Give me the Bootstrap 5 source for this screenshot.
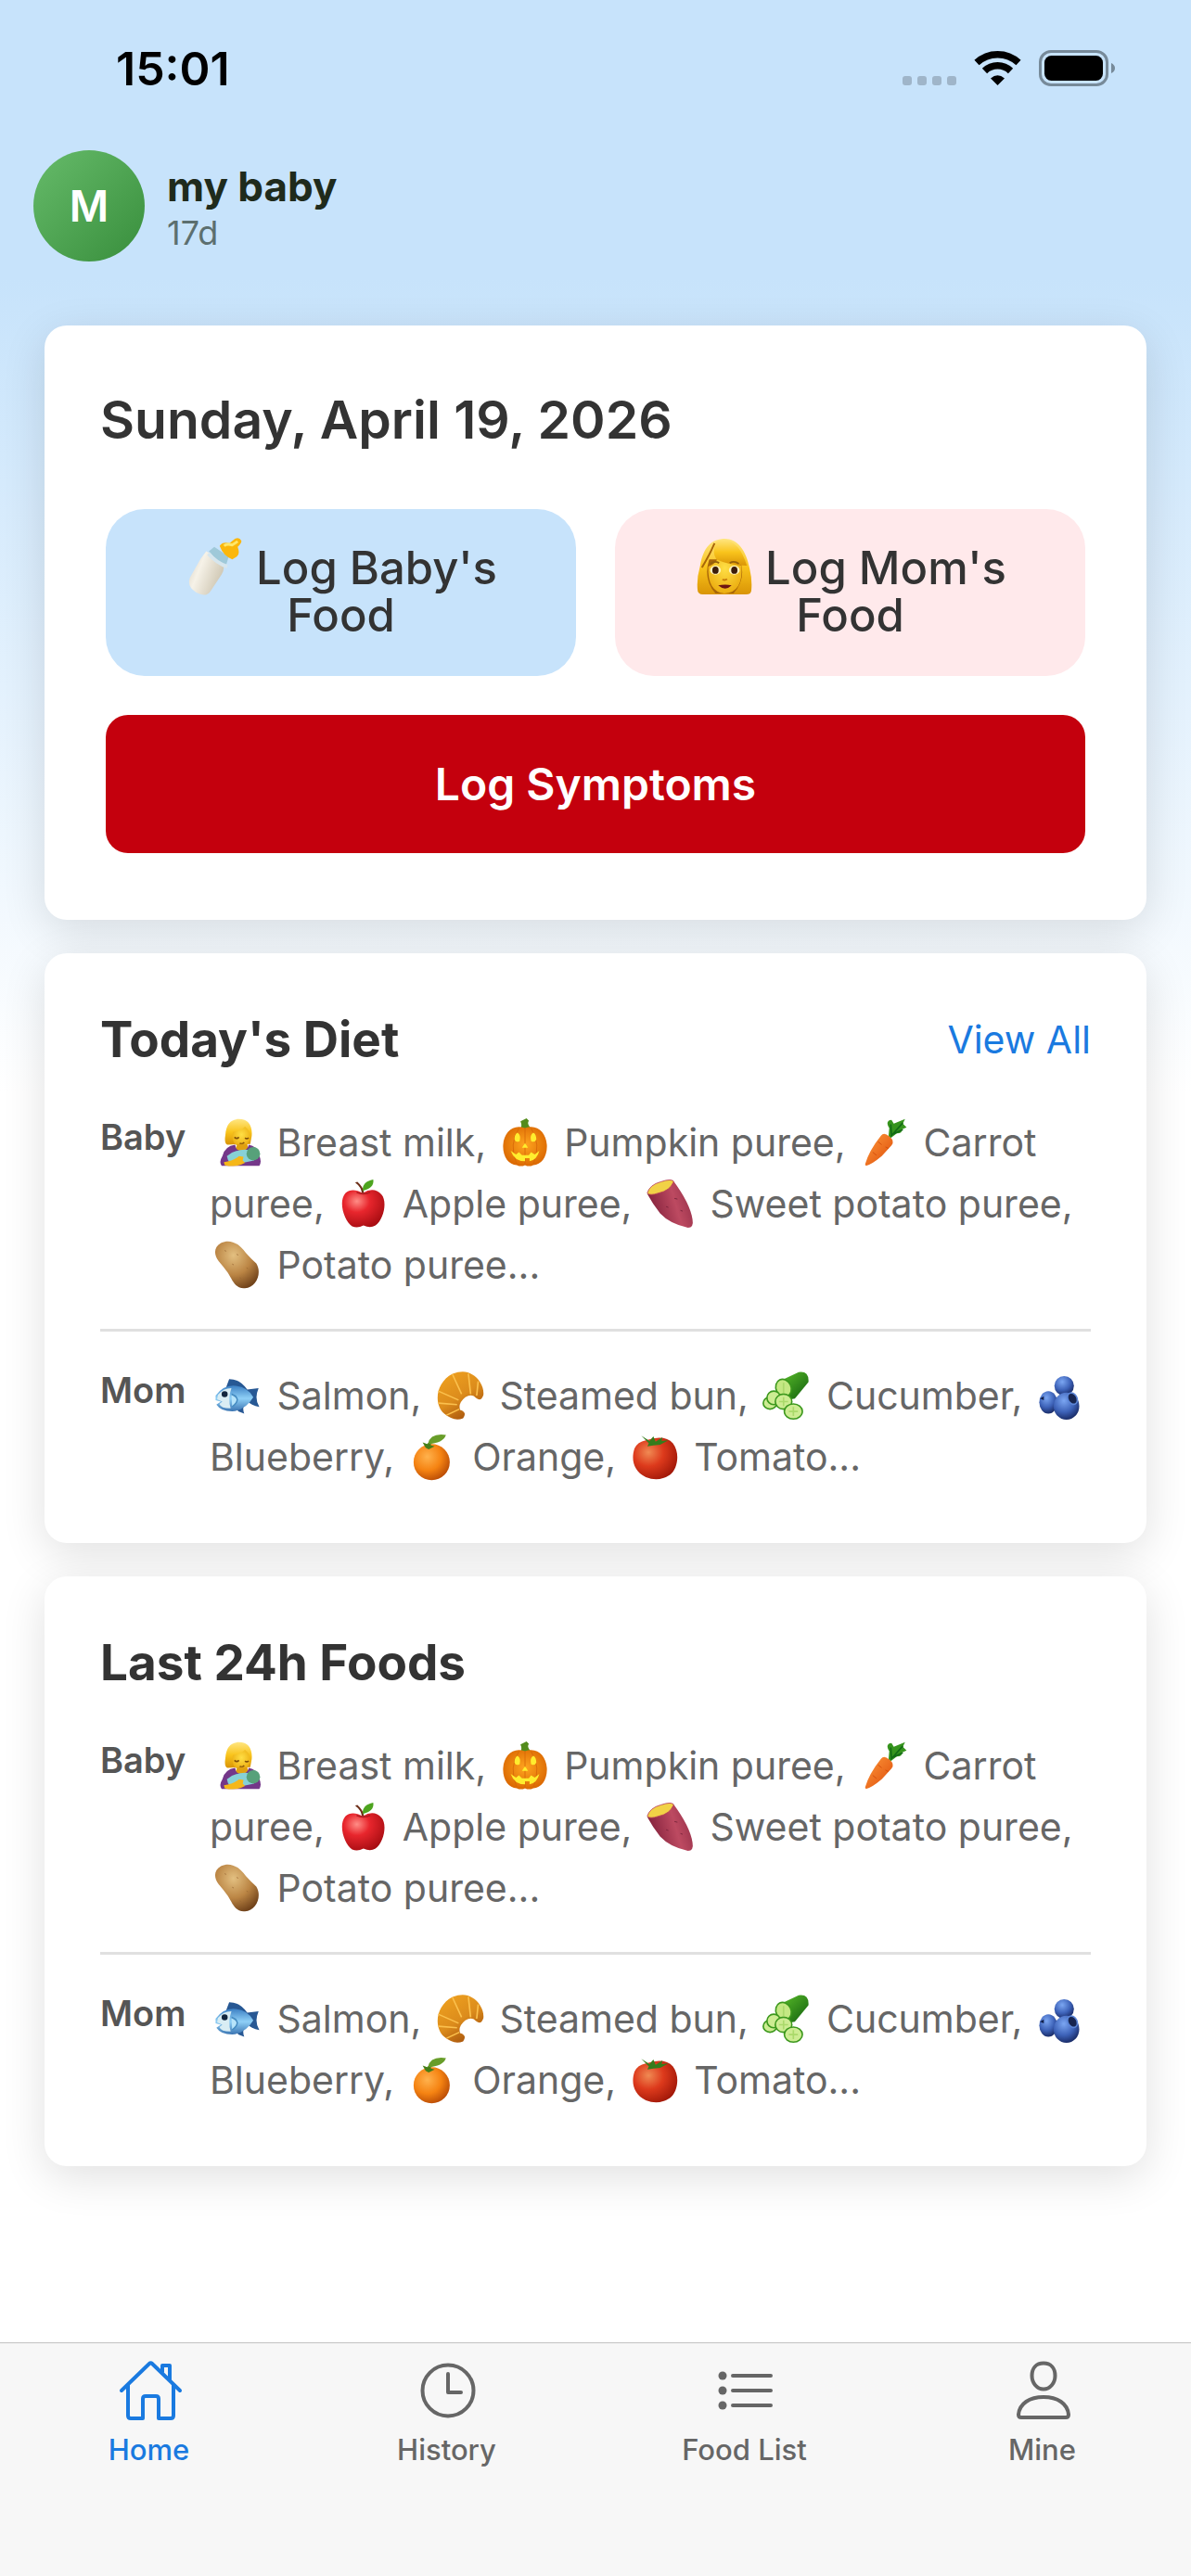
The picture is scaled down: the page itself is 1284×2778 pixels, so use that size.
<!DOCTYPE html>
<html lang="en">
<head>
<meta charset="utf-8">
<meta name="viewport" content="width=device-width, initial-scale=1">
<title>my baby</title>
<link rel="stylesheet" href="https://cdn.jsdelivr.net/npm/bootstrap@5.3.0/dist/css/bootstrap.min.css">
<style>
body{font-family:Inter,"Noto Sans",sans-serif;color:#333;background:#fff}
.app-shell{background:linear-gradient(180deg,#c7e3fb 300px,#fff 1180px)}
.status-bar{padding:44px 81px 58px 125px}
.status-time{font-size:50px;line-height:60px;font-weight:600;color:#000}
.status-icons{margin-top:-3px}
.profile-bar{padding:0 36px 69px;gap:24px}
.avatar{width:120px;height:120px;font-size:46px;background:linear-gradient(135deg,#66bb6a,#388e3c)}
.profile-name{font-size:44px;line-height:54px;font-weight:700;color:#1f2b1c}
.profile-age{font-size:36px;line-height:46px;color:#5c6f6f}
.feed{padding:0 48px 60px;gap:36px}
.panel{background:#fff;border-radius:24px;padding:60px;box-shadow:0 12px 48px rgba(0,0,0,.12)}
.date-title{font-size:57px;line-height:84px;font-weight:600}
.log-grid{margin:54px 6px 12px;gap:42px}
.log-pair{gap:42px}
.log-btn{flex:1 1 0;height:180px;border:0;border-radius:42px;font-size:49px;line-height:51px;font-weight:500;color:#333;padding:0 60px 3px}
.log-baby{background:#c7e3fb}
.log-mom{background:#ffe9eb}
.log-symptoms{height:149px;border:0;border-radius:24px;background:#c4000d;color:#fff;font-size:48px;font-weight:600}
.panel-title{font-size:53px;line-height:66px;font-weight:700}
.view-all{font-size:41px;line-height:66px;color:#1a7ae0}
.food-row{padding:36px 0}
.food-row + .food-row{border-top:3px solid #e0e0e0}
.food-list{margin-top:9px;margin-bottom:-36px}
.food-who{flex:0 0 118px;font-size:38px;line-height:54px;font-weight:600;color:#555}
.food-items{font-size:41px;line-height:66px;color:#666}
.emo{width:52px;height:52px;margin:-6px 5px -6px 4px;vertical-align:-5px}
.log-btn .emo{width:62px;height:62px;margin:-12px 0 -12px 2px;vertical-align:0}
.tab-bar{background:#f7f7f7;border-top:1px solid #c2c2c2;padding:15px 0 118px}
.tab-link{flex:1 1 0;color:#666;font-size:31px;line-height:36px;font-weight:500;gap:10px}
.tab-link.active{color:#1a7ae0}
.tab-link svg{width:72px;height:72px;fill:none;stroke:currentColor;stroke-width:4;stroke-linecap:round;stroke-linejoin:round}
</style>
<script src="https://cdn.jsdelivr.net/npm/bootstrap@5.3.0/dist/js/bootstrap.bundle.min.js"></script>
</head>
<body>
<svg width="0" height="0" class="position-absolute" aria-hidden="true">
<defs>
<linearGradient id="gMilk" x1="0" y1="0" x2="1" y2=".5"><stop offset="0" stop-color="#d5cdbd"/><stop offset=".4" stop-color="#f6f2e8"/><stop offset="1" stop-color="#cfc7b3"/></linearGradient>
<linearGradient id="gHair" x1="0" y1="0" x2="0" y2="1"><stop offset="0" stop-color="#ffe681"/><stop offset=".5" stop-color="#f9c41c"/><stop offset="1" stop-color="#d99406"/></linearGradient>
<radialGradient id="gFace" cx=".5" cy=".4" r=".65"><stop offset="0" stop-color="#ffdf45"/><stop offset="1" stop-color="#eaa90c"/></radialGradient>
<radialGradient id="gPump" cx=".5" cy=".45" r=".6"><stop offset="0" stop-color="#ffa51f"/><stop offset="1" stop-color="#d96500"/></radialGradient>
<linearGradient id="gCarrot" x1="0" y1="0" x2="1" y2="1"><stop offset="0" stop-color="#ff9a3c"/><stop offset="1" stop-color="#dc4a08"/></linearGradient>
<radialGradient id="gApple" cx=".35" cy=".3" r=".75"><stop offset="0" stop-color="#ff8d86"/><stop offset=".4" stop-color="#e8262d"/><stop offset="1" stop-color="#a80d12"/></radialGradient>
<linearGradient id="gSweet" x1="0" y1=".6" x2="1" y2=".3"><stop offset="0" stop-color="#7d1d38"/><stop offset=".6" stop-color="#bd4a61"/><stop offset="1" stop-color="#963049"/></linearGradient>
<radialGradient id="gPotato" cx=".42" cy=".3" r=".75"><stop offset="0" stop-color="#e3c081"/><stop offset=".55" stop-color="#bb8544"/><stop offset="1" stop-color="#70421a"/></radialGradient>
<linearGradient id="gFish" x1="0" y1="0" x2="0" y2="1"><stop offset="0" stop-color="#3c80c4"/><stop offset=".5" stop-color="#8fd0f7"/><stop offset="1" stop-color="#3a74b2"/></linearGradient>
<linearGradient id="gCroi" x1="0" y1="0" x2=".6" y2="1"><stop offset="0" stop-color="#f1a420"/><stop offset=".6" stop-color="#dc8c1c"/><stop offset="1" stop-color="#a9560d"/></linearGradient>
<radialGradient id="gBlue" cx=".4" cy=".3" r=".7"><stop offset="0" stop-color="#7ba6f2"/><stop offset=".6" stop-color="#3d62b8"/><stop offset="1" stop-color="#1b2e6b"/></radialGradient>
<radialGradient id="gOrange" cx=".38" cy=".35" r=".7"><stop offset="0" stop-color="#ffb24d"/><stop offset=".55" stop-color="#f58312"/><stop offset="1" stop-color="#b84a05"/></radialGradient>
<radialGradient id="gTomato" cx=".35" cy=".35" r=".75"><stop offset="0" stop-color="#f08a53"/><stop offset=".45" stop-color="#dd3a1c"/><stop offset="1" stop-color="#9c1507"/></radialGradient>
<linearGradient id="gCuke" x1="0" y1="0" x2="1" y2="1"><stop offset="0" stop-color="#5fc32c"/><stop offset="1" stop-color="#0f5c0d"/></linearGradient>
</defs>
<symbol id="bottle" viewBox="0 0 64 64">
<path d="M21 14 36 22Q44 30 38 40L26 58Q21 66 10 60Q-1 53 3 43L15 22Z" transform="translate(1 1)" fill="url(#gMilk)"/>
<path d="M22 15 28 10 44 21 41 31Q31 27 22 15Z" transform="translate(3 0)" fill="#9fc9d9"/>
<path d="M25 15Q33 25 45 29L44 33Q32 29 22 18Z" transform="translate(1 1)" fill="#d6e6ee"/>
<path d="M34 8Q37 3 45 5L51 0Q56-2 58 2Q59 4 54 9Q57 17 53 20L48 23Q38 19 34 8Z" transform="translate(3 1)" fill="#fbb70b"/>
<path d="M39 8Q42 5 48 7L54 3" transform="translate(3 1)" fill="none" stroke="#ffe76a" stroke-width="3"/>
</symbol>
<symbol id="woman" viewBox="0 0 64 64">
<path d="M32 1C47 1 56 14 60 34Q63 46 62 58Q62 63 56 63H8Q2 63 2 57Q1 45 5 31C8 13 16 1 32 1Z" fill="url(#gHair)"/>
<path d="M15 24Q8 46 22 62H42Q57 45 49 24Z" fill="#a86508"/>
<path d="M14 32Q26 28 26 15 36 28 51 31 53 61 32 62 13 60 14 32Z" fill="url(#gFace)"/>
<path d="M22 5Q18 17 23 24 38 31 57 31 49 4 31 1Z" fill="url(#gHair)"/>
<path d="M21 6Q15 20 7 33" fill="none" stroke="#a86508" stroke-width="2"/>
<ellipse cx="22" cy="36" rx="6" ry="5" fill="#fff4c0"/><ellipse cx="43" cy="36" rx="6" ry="5" fill="#fff4c0"/>
<ellipse cx="22" cy="36" rx="3.500" ry="4" fill="#3b1c0a"/><ellipse cx="43" cy="36" rx="3.500" ry="4" fill="#3b1c0a"/>
<path d="M16 29Q21 25 26 28M38 28Q43 25 48 29" fill="none" stroke="#93600c" stroke-width="2"/>
<path d="M30 46Q32 48 35 46" fill="none" stroke="#c67c0b" stroke-width="2"/>
<path d="M25 53Q33 51 40 53 33 60 25 53Z" fill="#6e1512"/>
</symbol>
<symbol id="nursing" viewBox="-5 0 64 64">
<path d="M14 35Q9 34 11 22C12 8 18 1 29 1C41 1 47 9 46 23L44 34Z" fill="url(#gHair)"/>
<path d="M21 18Q31 17 37 11 47 19 43 29 38 40 29 37 18 34 21 18Z" fill="url(#gFace)"/>
<path d="M23 25Q26 28 29 25M37 26Q39 28 42 26M30 33Q33 35 36 32" fill="none" stroke="#80500a" stroke-width="2"/>
<path d="M27 34H40L42 43H23Z" fill="#e0a010"/>
<path d="M24 35Q10 37 7 50 2 58 6 63H56Q60 58 55 47 53 37 42 35 40 44 31 43 24 42 24 35Z" fill="#743789"/>
<path d="M13 50Q25 40 43 42 53 45 49 56L25 61Q15 62 13 50Z" fill="#87d1d6"/>
<circle cx="48" cy="47" r="9" fill="#57a17a"/>
<path d="M9 58Q21 57 29 50L35 51 34 56 37 59Q26 66 10 62Z" fill="#f5b719"/>
</symbol>
<symbol id="pumpkin" viewBox="0 0 64 64">
<path d="M25 14Q29 11 26 4L34 0 37 3Q34 8 41 14Z" fill="#548c1d"/>
<path d="M32 13C48 7 60 19 61 35C62 50 54 62 43 62Q37 65 32 62 27 65 21 62C10 62 2 50 3 35C4 19 16 7 32 13Z" fill="url(#gPump)"/>
<path d="M24 13Q10 34 21 61M32 13V62M40 13Q54 34 43 61" fill="none" stroke="#d56608" stroke-width="1"/>
<path d="M22 19Q27 22 25 30 20 33 18 28 18 21 22 19ZM43 19Q38 22 40 30 45 33 47 28 47 21 43 19ZM32 33 36 39H28ZM13 43 20 48 24 45 28 49H37L40 45 45 48 51 43Q48 55 38 57V53H32V57Q18 57 13 43Z" fill="#ffed2e"/>
</symbol>
<symbol id="carrot" viewBox="0 0 64 64">
<path d="M38 24 39 13Q33 3 42 2L45 7 60 1 57 7 62 12 55 15Q57 20 49 20L41 26Z" fill="#36941d"/>
<path d="M41 24 57 6M42 23 41 8M44 21 57 15" fill="none" stroke="#126b15" stroke-width="2"/>
<path d="M28 23Q32 18 39 24 47 30 42 36L29 50Q16 61 8 63L7 61Q12 43 28 23Z" fill="url(#gCarrot)"/>
<path d="M24 31 29 35M17 45 22 49M34 38 38 40" stroke="#cf4808" stroke-width="1"/>
</symbol>
<symbol id="apple" viewBox="0 0 64 64">
<path d="M32 18Q18 10 9 18C-1 30 8 56 18 62Q25 65 33 61 42 65 49 61C60 53 65 29 57 20Q47 9 32 18Z" fill="url(#gApple)"/>
<path d="M22 4 25 3Q33 10 34 18H31Q30 10 22 4Z" fill="#6d2f19"/>
<path d="M32 15Q31 3 46 0 48 11 32 15Z" fill="#4da41f"/>
<path d="M24 17Q33 21 42 17" fill="none" stroke="#b21a20" stroke-width="2"/>
</symbol>
<symbol id="sweet" viewBox="0 0 64 64">
<path d="M1 19Q8 32 18 45 31 59 55 64 63 64 61 53 58 32 35 1Z" fill="url(#gSweet)"/>
<path d="M1 18Q4 7 19 3 34-2 36 3 31 15 16 18 4 22 1 18Z" fill="#f1d246" stroke="#b63b57" stroke-width="1"/>
<path d="M37 25 41 26M45 41 48 42M26 36 29 37" stroke="#712038" stroke-width="1"/>
</symbol>
<symbol id="potato" viewBox="0 0 64 64">
<path d="M10 3C23-3 34 4 43 16Q51 25 57 30C65 43 57 62 42 63C29 64 26 53 19 42Q13 34 7 27C0 18 1 8 10 3Z" fill="url(#gPotato)"/>
<path d="M15 13 17 14M31 18 33 19M25 31 27 32M44 36 46 37M35 49 37 50" stroke="#9a6935" stroke-width="1"/>
</symbol>
<symbol id="fish" viewBox="0 0 64 64">
<path d="M17 21 21 10Q35 10 45 24L60 22Q54 36 61 47 50 45 45 39 37 46 41 56L33 53Z" fill="#275894"/>
<path d="M3 32Q14 17 30 19 46 21 53 34 43 51 25 53 10 53 4 44L10 40 3 38Z" fill="url(#gFish)"/>
<path d="M6 31Q13 22 24 22 19 36 23 49 10 49 8 43L12 40 5 37Z" fill="#d9edf4"/>
<circle cx="15" cy="30" r="4" fill="#12263e"/>
<path d="M24 30Q39 36 25 47" fill="#b7e4fa" stroke="#468cc2" stroke-width="2"/>
</symbol>
<symbol id="croissant" viewBox="0 0 64 64">
<path d="M22 3Q38-3 48 4C57 9 64 20 63 31Q60 41 53 35 48 29 39 34 29 42 32 51 42 54 36 62 24 67 11 56C-3 44-1 15 22 3Z" fill="url(#gCroi)"/>
<path d="M22 4 34 30M43 3 46 30M56 13 54 32M3 26 30 38M3 42 28 44M14 58 31 50" fill="none" stroke="#fbc04d" stroke-width="2"/>
</symbol>
<symbol id="cucumber" viewBox="0 0 64 64">
<path d="M20 14 48 1Q62-1 61 14L43 36 31 38Z" fill="url(#gCuke)"/>
<ellipse cx="28" cy="22" rx="10" ry="12" transform="rotate(-25 28 22)" fill="#c4e883" stroke="#3c981d" stroke-width="2"/>
<g fill="#cdec92" stroke="#3c981d" stroke-width="2"><ellipse cx="10" cy="42" rx="9" ry="8"/><ellipse cx="15" cy="35" rx="9" ry="9"/><ellipse cx="28" cy="40" rx="11" ry="10"/><ellipse cx="41" cy="53" rx="12" ry="10"/></g>
<path d="M41 47V59M35 53H47M28 34V46M22 40H34M28 15V29" stroke="#aad96a" stroke-width="2"/>
</symbol>
<symbol id="blueberry" viewBox="0 0 64 64">
<circle cx="36" cy="19" r="13" fill="url(#gBlue)"/><ellipse cx="15" cy="41" rx="12" ry="15" fill="url(#gBlue)"/><ellipse cx="39" cy="46" rx="17" ry="18" fill="url(#gBlue)"/>
<ellipse cx="47" cy="36" rx="6" ry="8" transform="rotate(-30 47 36)" fill="#172550" stroke="#5c86d8" stroke-width="2"/><path d="M4 36 9 33 9 38Z" fill="#111f49"/>
</symbol>
<symbol id="orange" viewBox="0 0 64 64">
<circle cx="30" cy="39" r="24" fill="url(#gOrange)"/>
<path d="M22 20 18 13 24 15 29 10 29 17 34 18 26 22Z" fill="#447e17"/>
<path d="M25 15Q28 0 49 3 45 14 25 15Z" fill="#689d29"/>
</symbol>
<symbol id="tomato" viewBox="0 0 64 64">
<path d="M20 10Q45 2 56 14C66 27 62 49 52 56Q37 66 20 59C4 51 0 36 5 21Q9 12 20 10Z" fill="url(#gTomato)"/>
<path d="M14 4 25 11 30 5 33 12 42 6 41 11 50 10 39 16 30 17 22 18 24 14Z" fill="#357c1c"/>
</symbol>
</svg>

<div class="app-shell min-vh-100 d-flex flex-column">
<header>
<div class="status-bar d-flex justify-content-between align-items-center">
<span class="status-time">15:01</span>
<svg class="status-icons" width="230" height="40" viewBox="0 0 230 40" role="img" aria-label="Wi-Fi on, battery full">
<g fill="#9fb5c9"><rect y="29" width="10" height="10" rx="3"/><rect x="16" y="29" width="10" height="10" rx="3"/><rect x="32" y="29" width="10" height="10" rx="3"/><rect x="48" y="29" width="10" height="10" rx="3"/></g>
<g fill="none" stroke="#000" stroke-width="7.500"><path d="M80 14.500A33 33 0 0 1 125 14.500"/><path d="M88.500 23.500A20 20 0 0 1 116.500 23.500"/></g>
<path d="M95 31.500Q102.500 25 110 31.500L102.500 39Z"/>
<rect x="148.500" y="2.500" width="72" height="36" rx="11.500" fill="none" stroke="#778a99" stroke-width="3"/>
<rect x="153" y="7" width="63" height="27" rx="7.500"/><path d="M225 15Q229 17 229 20.500T225 26Z" fill="#778a99"/>
</svg>
</div>
<div class="profile-bar d-flex align-items-center">
<div class="avatar rounded-circle d-flex align-items-center justify-content-center text-white fw-semibold">M</div>
<div class="pt-1"><div class="profile-name">my baby</div><div class="profile-age">17d</div></div>
</div>
</header>

<main class="feed flex-grow-1 d-flex flex-column">
<section class="panel">
<h1 class="date-title m-0">Sunday, April 19, 2026</h1>
<div class="log-grid d-flex flex-column">
<div class="log-pair d-flex">
<button type="button" class="log-btn log-baby"><svg class="emo" aria-hidden="true"><use href="#bottle"/></svg> Log Baby's Food</button>
<button type="button" class="log-btn log-mom"><svg class="emo" aria-hidden="true"><use href="#woman"/></svg> Log Mom's Food</button>
</div>
<button type="button" class="log-symptoms w-100">Log Symptoms</button>
</div>
</section>

<section class="panel">
<div class="d-flex justify-content-between align-items-center">
<h2 class="panel-title m-0">Today's Diet</h2>
<a class="view-all text-decoration-none" href="#diet">View All</a>
</div>
<div class="food-list" id="diet">
<div class="food-row d-flex align-items-start">
<div class="food-who">Baby</div>
<div class="food-items"><svg class="emo" aria-hidden="true"><use href="#nursing"/></svg> Breast milk, <svg class="emo" aria-hidden="true"><use href="#pumpkin"/></svg> Pumpkin puree, <svg class="emo" aria-hidden="true"><use href="#carrot"/></svg> Carrot puree, <svg class="emo" aria-hidden="true"><use href="#apple"/></svg> Apple puree, <svg class="emo" aria-hidden="true"><use href="#sweet"/></svg> Sweet potato puree, <svg class="emo" aria-hidden="true"><use href="#potato"/></svg> Potato puree...</div>
</div>
<div class="food-row d-flex align-items-start">
<div class="food-who">Mom</div>
<div class="food-items"><svg class="emo" aria-hidden="true"><use href="#fish"/></svg> Salmon, <svg class="emo" aria-hidden="true"><use href="#croissant"/></svg> Steamed bun, <svg class="emo" aria-hidden="true"><use href="#cucumber"/></svg> Cucumber, <svg class="emo" aria-hidden="true"><use href="#blueberry"/></svg> Blueberry, <svg class="emo" aria-hidden="true"><use href="#orange"/></svg> Orange, <svg class="emo" aria-hidden="true"><use href="#tomato"/></svg> Tomato...</div>
</div>
</div>
</section>

<section class="panel">
<h2 class="panel-title m-0">Last 24h Foods</h2>
<div class="food-list">
<div class="food-row d-flex align-items-start">
<div class="food-who">Baby</div>
<div class="food-items"><svg class="emo" aria-hidden="true"><use href="#nursing"/></svg> Breast milk, <svg class="emo" aria-hidden="true"><use href="#pumpkin"/></svg> Pumpkin puree, <svg class="emo" aria-hidden="true"><use href="#carrot"/></svg> Carrot puree, <svg class="emo" aria-hidden="true"><use href="#apple"/></svg> Apple puree, <svg class="emo" aria-hidden="true"><use href="#sweet"/></svg> Sweet potato puree, <svg class="emo" aria-hidden="true"><use href="#potato"/></svg> Potato puree...</div>
</div>
<div class="food-row d-flex align-items-start">
<div class="food-who">Mom</div>
<div class="food-items"><svg class="emo" aria-hidden="true"><use href="#fish"/></svg> Salmon, <svg class="emo" aria-hidden="true"><use href="#croissant"/></svg> Steamed bun, <svg class="emo" aria-hidden="true"><use href="#cucumber"/></svg> Cucumber, <svg class="emo" aria-hidden="true"><use href="#blueberry"/></svg> Blueberry, <svg class="emo" aria-hidden="true"><use href="#orange"/></svg> Orange, <svg class="emo" aria-hidden="true"><use href="#tomato"/></svg> Tomato...</div>
</div>
</div>
</section>
</main>

<nav class="tab-bar d-flex" aria-label="Main">
<a class="tab-link active d-flex flex-column align-items-center text-decoration-none" href="#home" aria-current="page">
<svg viewBox="0 0 72 72" aria-hidden="true"><path d="M6 36 36 7Q37.500 5.500 39 7L69 36M13 30V63Q13 66 16 66H29V45Q29 42 32 42H43Q46 42 46 45V66H59Q62 66 62 63V30M50 16V9H58V25"/></svg>Home</a>
<a class="tab-link d-flex flex-column align-items-center text-decoration-none" href="#history">
<svg viewBox="0 0 72 72" aria-hidden="true"><circle cx="37" cy="36" r="27.500"/><path d="M37 18V38H51"/></svg>History</a>
<a class="tab-link d-flex flex-column align-items-center text-decoration-none" href="#foods">
<svg viewBox="0 0 72 72" aria-hidden="true"><g fill="currentColor" stroke="none"><circle cx="12" cy="20" r="4.500"/><circle cx="12" cy="36" r="4.500"/><circle cx="12" cy="52" r="4.500"/></g><path d="M23 20H64M23 36H64M23 52H64"/></svg>Food List</a>
<a class="tab-link d-flex flex-column align-items-center text-decoration-none" href="#mine">
<svg viewBox="0 0 72 72" aria-hidden="true"><path d="M37 6.500C45 6.500 49.500 12 49.500 20S44 34.500 37 34.500 24.500 28 24.500 20 29 6.500 37 6.500ZM10 62C11 50 22 43 37 43S63 50 64 62Q64 65 61 65H13Q10 65 10 62Z"/></svg>Mine</a>
</nav>
</div>
</body>
</html>
